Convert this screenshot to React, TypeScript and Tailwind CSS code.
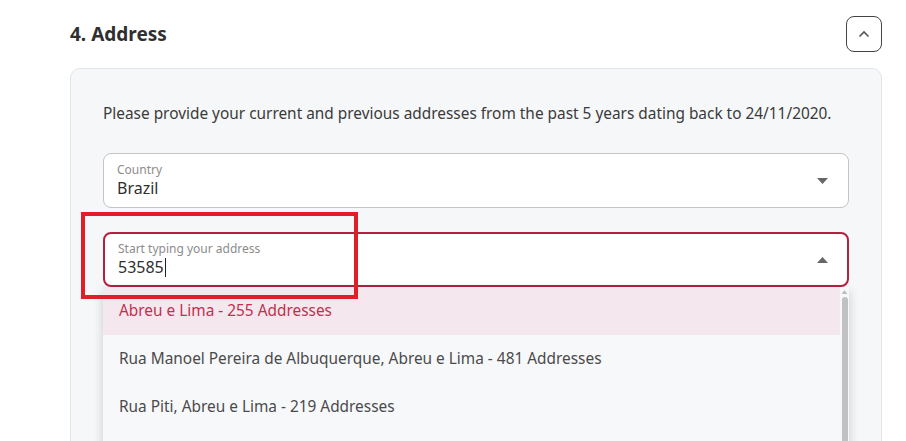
import React from 'react';

const font = { fontFamily: '"Noto Sans", "Open Sans", Arial, sans-serif' };

const options = [
  'Abreu e Lima - 255 Addresses',
  'Rua Manoel Pereira de Albuquerque, Abreu e Lima - 481 Addresses',
  'Rua Piti, Abreu e Lima - 219 Addresses',
];

function Caret({ up }: { up?: boolean }) {
  return (
    <svg width="11" height="6" viewBox="0 0 11 6" className="text-[#666]">
      {up ? (
        <path d="M0 6 L5.5 0 L11 6 Z" fill="currentColor" />
      ) : (
        <path d="M0 0 L5.5 6 L11 0 Z" fill="currentColor" />
      )}
    </svg>
  );
}

function Field({
  label,
  value,
  open,
}: {
  label: string;
  value: string;
  open?: boolean;
}) {
  return (
    <div
      className={
        open
          ? 'flex h-[55px] items-center rounded-[8px] border-2 border-[#b3213f] bg-white pl-[13px] pr-[19px]'
          : 'flex h-[55px] items-center rounded-[8px] border border-[#c4c4c4] bg-white pl-[13px] pr-[20px]'
      }
    >
      <div className="flex flex-1 flex-col">
        <span className="text-[12px] leading-[16px] text-[#8c8c8c]">{label}</span>
        <span className="flex items-center text-[16px] leading-[21px] text-[#2f2f2f]">
          {value}
          {open && <span className="ml-[1px] inline-block h-[19px] w-[1px] bg-[#222]" />}
        </span>
      </div>
      <Caret up={open} />
    </div>
  );
}

export default function App() {
  return (
    <div
      className="relative h-[441px] w-[906px] overflow-hidden bg-white pl-[70px] pr-[24px]"
      style={font}
    >
      <div className="flex h-[68px] items-center justify-between">
        <h2 className="text-[19px] font-bold text-[#2f2f2f]">4. Address</h2>
        <button className="flex h-[36px] w-[36px] items-center justify-center rounded-[8px] border border-[#444] bg-white">
          <svg width="12" height="8" viewBox="0 0 12 8" fill="none">
            <path d="M1.5 6.5 L6 2 L10.5 6.5" stroke="#555" strokeWidth="1.6" />
          </svg>
        </button>
      </div>

      <div className="h-[420px] rounded-[10px] border border-[#e2e5e9] bg-[#f6f7f9] px-[32px] pt-[33px]">
        <p className="text-[15.4px] leading-[24px] text-[#3a3a3a]">
          Please provide your current and previous addresses from the past 5 years dating back to 24/11/2020.
        </p>
        <div className="mt-[27px]">
          <Field label="Country" value="Brazil" />
        </div>
        <div className="mt-[24px]">
          <Field label="Start typing your address" value="53585" open />
          <div className="flex h-[170px] bg-[#f7f8fa] shadow-[0_4px_10px_rgba(0,0,0,0.18)]">
            <ul className="flex-1">
              {options.map((o, i) => (
                <li
                  key={o}
                  className={
                    i === 0
                      ? 'flex h-[48px] items-center bg-[#f4e8ee] px-[16px] text-[15.4px] text-[#c0304f]'
                      : 'flex h-[48px] items-center px-[16px] text-[15.4px] text-[#4a4a4a]'
                  }
                >
                  {o}
                </li>
              ))}
            </ul>
            <div className="flex w-[9px] flex-col items-center pt-[3px]">
              <svg width="7" height="5" viewBox="0 0 7 5">
                <path d="M0 5 L3.5 0 L7 5 Z" fill="#bdbdbd" />
              </svg>
              <div className="mt-[3px] h-[200px] w-[6px] rounded-full bg-[#c1c1c1]" />
            </div>
          </div>
        </div>
      </div>

      <div className="absolute left-[81px] top-[212px] h-[87px] w-[277px] border-[4px] border-[#e31d25]" />
    </div>
  );
}
